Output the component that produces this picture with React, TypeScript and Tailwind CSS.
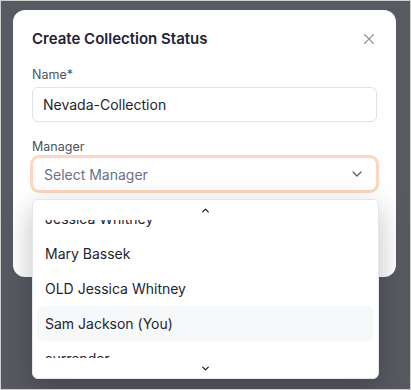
import React from 'react';
import { X, ChevronDown, ChevronUp } from 'lucide-react';

const MANAGERS = ['Jessica Whitney', 'Mary Bassek', 'OLD Jessica Whitney', 'Sam Jackson (You)', 'surrender'];

export default function App() {
  return (
    <div
      className="w-[411px] h-[390px] overflow-hidden border border-[#cfcfcf] bg-[#575a61]"
      style={{ fontFamily: 'Inter, "Noto Sans", sans-serif' }}
    >
      <div className="relative ml-[12px] mt-[9px] w-[383px] rounded-xl bg-white px-[19px] pt-[19px] pb-[17px]">
        {/* Header */}
        <div className="flex items-center justify-between">
          <h2 className="text-[15px] leading-5 font-semibold text-[#1c2434]">Create Collection Status</h2>
          <X className="h-[18px] w-[18px] text-[#8c93a6] mr-[-1px]" strokeWidth={1.5} />
        </div>

        {/* Name */}
        <label className="mt-[18px] block text-[12.5px] leading-4 text-[#4b5262]">Name*</label>
        <div className="mt-[4px] flex h-[35px] items-center rounded-md border border-[#dfe2e8] px-[10px] text-[14px] text-[#1f2530]">
          Nevada-Collection
        </div>

        {/* Manager */}
        <label className="mt-[17px] block text-[12.5px] leading-4 text-[#4b5262]">Manager</label>
        <div className="mt-0 -mx-[2px] rounded-[9px] border-[3px] border-[#fed6bf]">
          <div className="flex h-[32px] items-center justify-between rounded-md px-[11px] text-[14px] text-[#6b7285]">
            <span>Select Manager</span>
            <ChevronDown className="h-4 w-4 text-[#5b6275]" strokeWidth={2} />
          </div>
        </div>

        {/* Footer buttons hidden behind list */}
        <div className="mt-[37px] flex justify-end gap-2">
          <div className="mr-auto h-[30px] w-[90px] rounded-md border border-[#dfe2e8]" />
        </div>

        {/* Dropdown list */}
        <div className="absolute left-[19px] top-[189px] z-10 h-[180px] w-[347px] overflow-hidden rounded-md border border-[#e4e6eb] bg-white shadow-[0_10px_30px_rgba(0,0,0,0.25)]">
          <div className="relative z-10 flex h-[20px] items-center justify-center bg-white">
            <ChevronUp className="h-[11px] w-[11px] text-[#222]" strokeWidth={3} />
          </div>
          <div className="-mt-[19px] px-[4px]">
            {MANAGERS.map((m, i) => (
              <div
                key={m}
                className={
                  'flex h-[35px] items-center rounded-md px-[8px] text-[14px] text-[#1f2530] ' +
                  (i === 3 ? 'bg-[#f7f8fa]' : '')
                }
              >
                {m}
              </div>
            ))}
          </div>
          <div className="absolute bottom-0 left-0 right-0 flex h-[20px] items-center justify-center bg-white">
            <ChevronDown className="h-[11px] w-[11px] text-[#222]" strokeWidth={3} />
          </div>
        </div>
      </div>
    </div>
  );
}
